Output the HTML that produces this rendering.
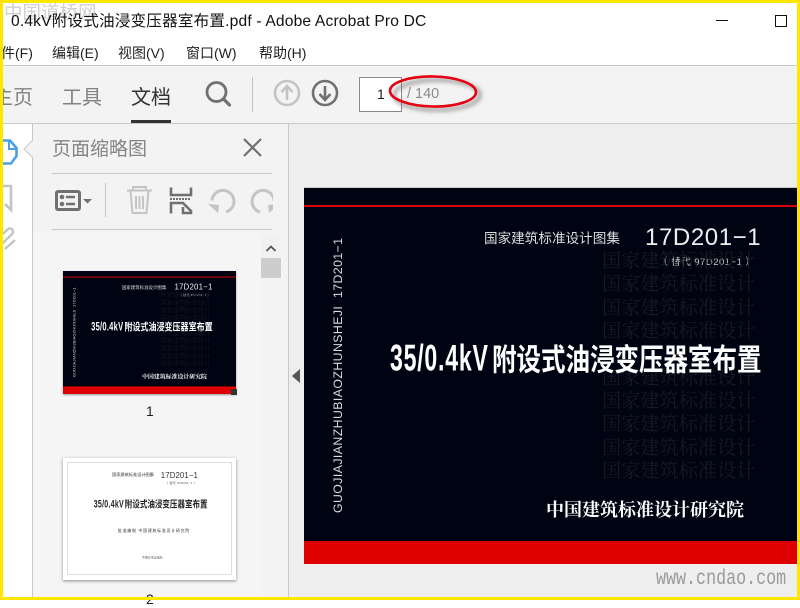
<!DOCTYPE html>
<html><head><meta charset="utf-8">
<style>
html,body{margin:0;padding:0;background:#fff}
body{width:800px;height:600px;position:relative;overflow:hidden;font-family:"Liberation Sans","Noto Sans CJK SC",sans-serif}
.a{position:absolute;white-space:nowrap}
.cov{position:absolute;width:529px;height:376px;background:#000311;overflow:hidden;font-family:"Liberation Sans","Noto Sans CJK SC",sans-serif}
.cov .a{line-height:1}
.wm{left:298px;font:19.2px/1 "Noto Serif CJK SC",serif;color:#191922;letter-spacing:0}
.tt{left:86px;top:158px;font-size:24.5px;font-weight:bold;color:#fff;transform:scaleY(1.25);transform-origin:0 50%;height:25px}
.tt span{font-size:30px;line-height:25px;letter-spacing:1px;display:inline-block;transform:scaleX(.77);transform-origin:0 0;width:102px;height:25px;vertical-align:baseline}
</style></head><body>

<!-- title bar -->
<div class="a" style="left:4px;top:0;font:18.500px/24px 'Noto Sans CJK SC',sans-serif;color:#cfcfcf">中国道桥网</div>
<div class="a" style="left:11px;top:12px;font-size:15.600px;line-height:20px;color:#111;letter-spacing:.17px">0.4kV附设式油浸变压器室布置.pdf - Adobe Acrobat Pro DC</div>
<div class="a" style="left:716px;top:20px;width:12px;height:1px;background:#111"></div>
<div class="a" style="left:775px;top:15px;width:10px;height:10px;border:1px solid #111"></div>

<!-- menu -->
<div class="a" style="left:1px;top:44px;font-size:14px;line-height:18px;color:#222">件(F)</div>
<div class="a" style="left:52px;top:44px;font-size:14px;line-height:18px;color:#222">编辑(E)</div>
<div class="a" style="left:118px;top:44px;font-size:14px;line-height:18px;color:#222">视图(V)</div>
<div class="a" style="left:186px;top:44px;font-size:14px;line-height:18px;color:#222">窗口(W)</div>
<div class="a" style="left:259px;top:44px;font-size:14px;line-height:18px;color:#222">帮助(H)</div>

<!-- toolbar -->
<div class="a" style="left:0;top:65px;width:800px;height:59px;background:#f3f3f3;border-top:1px solid #c8c8c8;border-bottom:1px solid #c8c8c8;box-sizing:border-box"></div>
<div class="a" style="left:-7px;top:82px;font:20px/28px 'Noto Sans CJK SC',sans-serif;color:#808080">主页</div>
<div class="a" style="left:62px;top:82px;font:20px/28px 'Noto Sans CJK SC',sans-serif;color:#808080">工具</div>
<div class="a" style="left:131px;top:82px;font:20px/28px 'Noto Sans CJK SC',sans-serif;color:#333">文档</div>
<div class="a" style="left:131px;top:120px;width:40px;height:3px;background:#333"></div>
<svg class="a" style="left:0;top:0" width="800" height="130" fill="none">
<circle cx="216.500" cy="92" r="9.500" stroke="#707070" stroke-width="2.800"/>
<path d="M223.500 99l6 6" stroke="#707070" stroke-width="3.200" stroke-linecap="round"/>
<path d="M252.500 77v35" stroke="#c4c4c4" stroke-width="1"/>
<circle cx="287" cy="93" r="12" stroke="#c4c4c4" stroke-width="2.600"/>
<path d="M287 100V87M281.500 92l5.500-6 5.500 6" stroke="#c4c4c4" stroke-width="2.600"/>
<circle cx="325" cy="93" r="12" stroke="#707070" stroke-width="2.600"/>
<path d="M325 86v13M319.500 94l5.500 6 5.500-6" stroke="#707070" stroke-width="2.600"/>
</svg>
<div class="a" style="left:359px;top:77px;width:41px;height:33px;background:#fff;border:1px solid #8a8a8a"></div>
<div class="a" style="left:377px;top:85px;font-size:14px;line-height:18px;color:#222">1</div>
<div class="a" style="left:407px;top:85px;font-size:14.500px;line-height:18px;color:#8a8a8a">/ 140</div>

<!-- left rail & panel -->
<div class="a" style="left:32px;top:124px;width:257px;height:476px;background:#f3f3f3;border-left:1px solid #c8c8c8;border-right:1px solid #c8c8c8;box-sizing:border-box"></div>
<div class="a" style="left:0;top:124px;width:32px;height:476px;background:#fff"></div>
<div class="a" style="left:289px;top:124px;width:511px;height:476px;background:#eee"></div>
<div class="a" style="left:33px;top:232px;width:228px;height:368px;background:#f5f5f5"></div>
<svg class="a" style="left:0;top:124px" width="300" height="160" fill="none">
<path d="M33 16l-9 9 9 9" fill="#f3f3f3" stroke="#c8c8c8"/>
<path d="M3 16.500H10L16.500 24V32L11 39.500H3" stroke="#4a9fe8" stroke-width="2.600"/>
<path d="M9 17v8h7" stroke="#4a9fe8" stroke-width="2"/>
<path d="M3 62H11V86L5 80" stroke="#c4c4c4" stroke-width="2.600"/>
<path d="M3 119l9-9c3-3-1-7-4-5l-5 5M5 125l10-9" stroke="#c4c4c4" stroke-width="2.400"/>
<path d="M244 15l17 17M261 15l-17 17" stroke="#707070" stroke-width="2.200"/>
<path d="M52 49.500h220M52 105.500h220" stroke="#c8c8c8"/>
<path d="M105.500 59v34" stroke="#c8c8c8"/>
<rect x="56.500" y="67.500" width="23" height="18" rx="1.500" stroke="#707070" stroke-width="3"/>
<circle cx="62" cy="73" r="2.300" fill="#707070"/><circle cx="62" cy="80" r="2.300" fill="#707070"/>
<path d="M66 73h9M66 80h9" stroke="#707070" stroke-width="2.400"/>
<path d="M83 75h9l-4.500 4.500z" fill="#707070"/>
<path d="M127 66.500h25M133 66v-3h13v3M130.500 67l2 22h14l2-22M136 72v13M139.500 72v13M143 72v13" stroke="#c4c4c4" stroke-width="2"/>
<path d="M171 63.500v7.500h20v-7.500M171 89.500V79H183L191 87V89H183V83" stroke="#707070" stroke-width="2.600"/>
<path d="M170 75h21" stroke="#707070" stroke-width="2" stroke-dasharray="2 1"/>
<path d="M212 76.500A11 11 0 1 1 226 88" stroke="#c4c4c4" stroke-width="3"/>
<path d="M208 80L219 81L218 89z" fill="#c4c4c4"/>
<path d="M274 76.500A11 11 0 1 0 260 88" stroke="#c4c4c4" stroke-width="3"/>
<path d="M268 81L279 80L269 89z" fill="#c4c4c4"/>
<rect x="261" y="113" width="20" height="21" fill="#f1f1f1"/>
<path d="M266.500 127l4.500-4.500 4.500 4.500" stroke="#555" stroke-width="1.800"/>
<rect x="261" y="134" width="20" height="20" fill="#cdcdcd"/>
</svg>
<div class="a" style="left:273px;top:124px;width:15px;height:108px;background:#f3f3f3"></div>
<div class="a" style="left:52px;top:135px;font:19px/26px 'Noto Sans CJK SC',sans-serif;color:#858585">页面缩略图</div>

<!-- thumb 1 -->
<div class="a" style="left:63px;top:271px;width:173px;height:123px;overflow:hidden;box-shadow:0 1px 2px #999">
<div class="cov" style="left:0;top:0;transform:scale(.327);transform-origin:0 0;filter:blur(.6px)">
 <div class="a" style="left:0;top:17px;width:529px;height:3px;background:#d8000a"></div>
 <div class="a" style="left:180px;top:44px;font-size:13.600px;color:#ddd">国家建筑标准设计图集</div>
 <div class="a" style="left:341px;top:38px;font-size:24px;color:#eee;letter-spacing:.6px">17D201−1</div>
 <div class="a" style="left:354px;top:70px;font-size:9.500px;color:#ccc;letter-spacing:.5px">（ 替代 97D201−1 ）</div>
 <div class="a wm" style="top:62px">国家建筑标准设计</div><div class="a wm" style="top:85px">国家建筑标准设计</div><div class="a wm" style="top:109px">国家建筑标准设计</div><div class="a wm" style="top:132px">国家建筑标准设计</div><div class="a wm" style="top:179px">国家建筑标准设计</div><div class="a wm" style="top:202px">国家建筑标准设计</div><div class="a wm" style="top:225px">国家建筑标准设计</div><div class="a wm" style="top:249px">国家建筑标准设计</div><div class="a wm" style="top:272px">国家建筑标准设计</div>
 <div class="a tt"><span>35/0.4kV</span>附设式油浸变压器室布置</div>
 <div class="a" style="left:242px;top:312px;font:bold 18px/1 'Noto Serif CJK SC',serif;color:#fff">中国建筑标准设计研究院</div>
 <div class="a" style="left:28px;top:325px;font-size:12.300px;color:#ddd;transform:rotate(-90deg);transform-origin:0 0;letter-spacing:.43px">GUOJIAJIANZHUBIAOZHUNSHEJI&nbsp; 17D201−1</div>
 <div class="a" style="left:0;top:353px;width:529px;height:23px;background:#de0000"></div>
</div></div>
<div class="a" style="left:231px;top:389px;width:6px;height:6px;background:#333"></div>
<div class="a" style="left:146px;top:402px;font-size:14px;line-height:18px;color:#222">1</div>

<!-- thumb 2 -->
<div class="a" style="left:63px;top:458px;width:173px;height:122px;background:#fff;box-shadow:0 1px 3px #888;overflow:hidden">
<div class="a" style="left:4px;top:4px;width:163px;height:111px;border:1px solid #ddd"></div>
<div class="cov" style="left:0;top:0;background:transparent;transform:scale(.327);transform-origin:0 0;filter:blur(.6px)">
 <div class="a" style="left:150px;top:45px;font-size:12.800px;color:#333">国家建筑标准设计图集</div>
 <div class="a" style="left:299px;top:42px;font-size:24px;color:#333;letter-spacing:.3px">17D201−1</div>
 <div class="a" style="left:312px;top:73px;font-size:9.500px;color:#555;letter-spacing:.5px">（ 替代 97D201−1 ）</div>
 <div class="a" style="left:94px;top:128px;font-size:23px;font-weight:bold;color:#222;transform:scaleY(1.25);transform-origin:0 50%;height:23px"><span style="font-size:28px;line-height:23px;letter-spacing:1px;display:inline-block;transform:scaleX(.77);transform-origin:0 0;width:95px;height:23px">35/0.4kV</span>附设式油浸变压器室布置</div>
 <div class="a" style="left:168px;top:216px;font-size:12px;color:#333;letter-spacing:2.300px">批准编制 中国建筑标准设计研究院</div>
 <div class="a" style="left:242px;top:302px;font-size:8px;color:#333;letter-spacing:1.200px">中国计划出版社</div>
</div></div>
<div class="a" style="left:146px;top:590px;font-size:14px;line-height:18px;color:#222">2</div>

<!-- main page -->
<svg class="a" style="left:291px;top:369px" width="10" height="15"><path d="M9 0v14L1 7z" fill="#555"/></svg>
<div class="cov" style="left:304px;top:188px;width:493px;box-shadow:0 -1px 0 #ccc">
 <div class="a" style="left:0;top:17px;width:493px;height:2px;background:#d8000a"></div>
 <div class="a" style="left:180px;top:44px;font-size:13.600px;color:#ddd">国家建筑标准设计图集</div>
 <div class="a" style="left:341px;top:38px;font-size:24px;color:#eee;letter-spacing:.6px">17D201−1</div>
 <div class="a" style="left:354px;top:70px;font-size:9.500px;color:#ccc;letter-spacing:.5px">（ 替代 97D201−1 ）</div>
 <div class="a wm" style="top:62px">国家建筑标准设计</div><div class="a wm" style="top:85px">国家建筑标准设计</div><div class="a wm" style="top:109px">国家建筑标准设计</div><div class="a wm" style="top:132px">国家建筑标准设计</div><div class="a wm" style="top:179px">国家建筑标准设计</div><div class="a wm" style="top:202px">国家建筑标准设计</div><div class="a wm" style="top:225px">国家建筑标准设计</div><div class="a wm" style="top:249px">国家建筑标准设计</div><div class="a wm" style="top:272px">国家建筑标准设计</div>
 <div class="a tt"><span>35/0.4kV</span>附设式油浸变压器室布置</div>
 <div class="a" style="left:242px;top:312px;font:bold 18px/1 'Noto Serif CJK SC',serif;color:#fff">中国建筑标准设计研究院</div>
 <div class="a" style="left:28px;top:325px;font-size:12.300px;color:#ddd;transform:rotate(-90deg);transform-origin:0 0;letter-spacing:.43px">GUOJIAJIANZHUBIAOZHUNSHEJI&nbsp; 17D201−1</div>
 <div class="a" style="left:0;top:353px;width:493px;height:23px;background:#de0000"></div>
</div>
<div class="a" style="left:656px;top:570px;font:16.700px/20px 'Liberation Mono',monospace;color:#9a9a9a;transform:scaleY(1.250);transform-origin:0 50%">www.cndao.com</div>

<!-- ellipse annotation -->
<svg class="a" style="left:375px;top:65px" width="120" height="60" fill="none">
<defs><filter id="s" x="-20%" y="-40%" width="140%" height="180%"><feGaussianBlur stdDeviation="2"/></filter></defs>
<ellipse cx="62" cy="30" rx="43" ry="15" stroke="#666" stroke-width="3" filter="url(#s)" opacity=".7"/>
<ellipse cx="58" cy="26.500" rx="43" ry="15" stroke="#e60012" stroke-width="2.600" transform="rotate(1 58 26)"/>
</svg>

<!-- yellow frame -->
<div class="a" style="left:0;top:0;width:800px;height:3px;background:#ffe600"></div>
<div class="a" style="left:0;top:597px;width:800px;height:3px;background:#ffe600"></div>
<div class="a" style="left:0;top:0;width:3px;height:600px;background:#ffe600"></div>
<div class="a" style="left:797px;top:0;width:3px;height:600px;background:#ffe600"></div>
</body></html>
